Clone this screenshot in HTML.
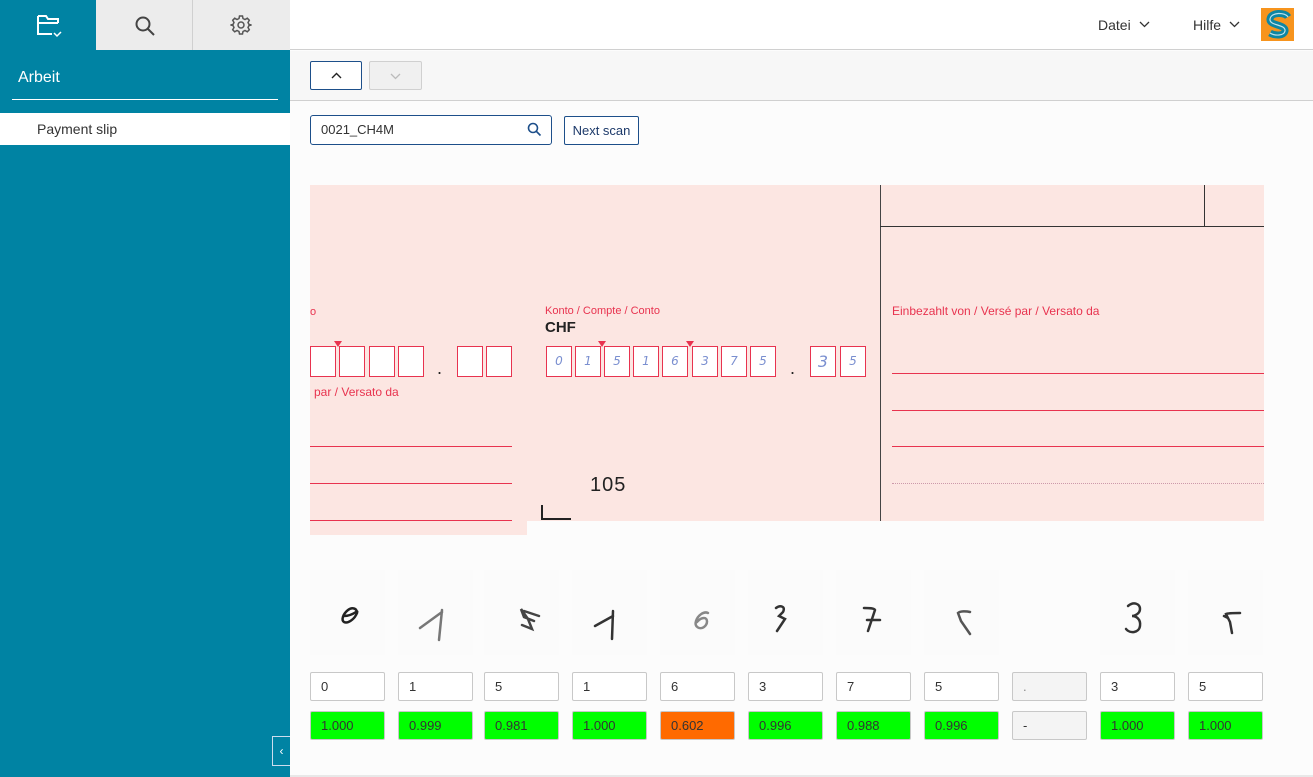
<!DOCTYPE html>
<html><head><meta charset="utf-8"><style>
*{margin:0;padding:0;box-sizing:border-box}
body{width:1313px;height:777px;position:relative;overflow:hidden;background:#fcfcfc;font-family:"Liberation Sans",Arial,sans-serif;font-size:13px;color:#333}
.a{position:absolute}
.red{color:#e8334f}
.bx{position:absolute;border:1px solid #e8334f;background:#fff;width:26px;height:31px;top:346px}
.hw{font-family:"DejaVu Sans",sans-serif;color:#7a8fd0;font-size:12px;font-style:italic;text-align:center;line-height:29px}
.rl{position:absolute;height:1px;background:#e8334f}
.in{position:absolute;width:75px;height:29px;border:1px solid #c8c8c8;border-radius:2px;background:#fff;padding-left:10px;line-height:27px;font-size:13px;color:#333;top:672px}
.sc{position:absolute;width:75px;height:29px;border:1px solid #c8c8c8;border-radius:2px;background:#00ff00;padding-left:10px;line-height:27px;font-size:13px;color:#333;top:711px}
.dg{position:absolute;top:570px;width:75px;height:85px;background:#fbfbfb}
.dg svg{position:absolute;left:0;top:0}
</style></head><body>
<!-- sidebar -->
<div class="a" style="left:0;top:0;width:290px;height:777px;background:#0083a3"></div>
<div class="a" style="left:96px;top:0;width:194px;height:50px;background:#ececec"></div>
<div class="a" style="left:192px;top:0;width:1px;height:50px;background:#d0d0d0"></div>
<svg class="a" style="left:36px;top:13px" width="30" height="26" viewBox="0 0 30 26" fill="none" stroke="#fff" stroke-width="2"><path d="M2 3h8l2 3h10v4M2 3v18h14M2 10h20"/><path d="M18 20l3 3 4-4" stroke-width="1.5"/></svg>
<svg class="a" style="left:134px;top:15px" width="22" height="22" viewBox="0 0 22 22" fill="none" stroke="#444" stroke-width="2"><circle cx="9" cy="9" r="6.5"/><path d="M14 14l6 6"/></svg>
<svg class="a" style="left:230px;top:14px" width="22" height="22" viewBox="0 0 22 22" fill="none" stroke="#555" stroke-width="1.5"><circle cx="11" cy="11" r="3"/><path d="M9.5 2h3l.5 2.5 2 1 2.3-1.3 2 2-1.3 2.3 1 2L21.5 11v0l-2.5.5-1 2 1.3 2.3-2 2-2.3-1.3-2 1-.5 2.5h-3l-.5-2.5-2-1-2.3 1.3-2-2 1.3-2.3-1-2L.5 11l2.5-.5 1-2-1.3-2.3 2-2 2.3 1.3 2-1z"/></svg>
<div class="a" style="left:18px;top:69px;color:#fff;font-size:16px">Arbeit</div>
<div class="a" style="left:12px;top:99px;width:266px;height:1px;background:#fff"></div>
<div class="a" style="left:0;top:113px;width:290px;height:32px;background:#fff"></div>
<div class="a" style="left:37px;top:121px;font-size:14px;color:#333">Payment slip</div>
<div class="a" style="left:272px;top:736px;width:18px;height:30px;border:1px solid #cde;border-right:none;color:#fff;font-size:12px;text-align:center;line-height:28px">‹</div>
<!-- header -->
<div class="a" style="left:290px;top:0;width:1023px;height:50px;background:#fff;border-bottom:1px solid #d0d0d0"></div>
<div class="a" style="left:1098px;top:17px;font-size:14px;color:#333">Datei</div>
<svg class="a" style="left:1139px;top:21px" width="11" height="7" viewBox="0 0 11 7" fill="none" stroke="#333" stroke-width="1.3"><path d="M1 1l4.5 4.5L10 1"/></svg>
<div class="a" style="left:1193px;top:17px;font-size:14px;color:#333">Hilfe</div>
<svg class="a" style="left:1229px;top:21px" width="11" height="7" viewBox="0 0 11 7" fill="none" stroke="#333" stroke-width="1.3"><path d="M1 1l4.5 4.5L10 1"/></svg>
<svg class="a" style="left:1261px;top:8px" width="33" height="33" viewBox="0 0 33 33"><rect width="33" height="33" fill="#f7941d"/><path d="M27 9C24 4 10 4 9 11c-1 7 16 5 15 12-1 5-10 5-15 2" stroke="#0f86a3" stroke-width="7" fill="none"/><path d="M27 9C24 4 10 4 9 11c-1 7 16 5 15 12-1 5-10 5-15 2" stroke="#bfe3ec" stroke-width="1.2" fill="none"/></svg>
<!-- toolbar -->
<div class="a" style="left:290px;top:51px;width:1023px;height:50px;background:#f7f7f7;border-bottom:1px solid #d0d0d0"></div>
<div class="a" style="left:310px;top:61px;width:52px;height:29px;border:1px solid #1d4f8a;border-radius:2px;background:#fff"></div>
<svg class="a" style="left:331px;top:72px" width="11" height="7" viewBox="0 0 11 7" fill="none" stroke="#222" stroke-width="1.4"><path d="M1 6l4.5-4.5L10 6"/></svg>
<div class="a" style="left:369px;top:61px;width:53px;height:29px;border:1px solid #d0d0d0;border-radius:2px;background:#f0f0f0"></div>
<svg class="a" style="left:390px;top:73px" width="11" height="7" viewBox="0 0 11 7" fill="none" stroke="#bbb" stroke-width="1.3"><path d="M1 1l4.5 4.5L10 1"/></svg>
<div class="a" style="left:310px;top:115px;width:242px;height:30px;border:1px solid #1d4f8a;border-radius:3px;background:#fff;padding-left:10px;line-height:28px;font-size:13px">0021_CH4M</div>
<svg class="a" style="left:527px;top:122px" width="15" height="15" viewBox="0 0 15 15" fill="none" stroke="#1d4f8a" stroke-width="1.6"><circle cx="6" cy="6" r="4.5"/><path d="M9.5 9.5l4 4"/></svg>
<div class="a" style="left:564px;top:116px;width:75px;height:29px;border:1px solid #1d4f8a;border-radius:2px;background:#fff;text-align:center;line-height:28px;font-size:13px;color:#1d3a6a">Next scan</div>
<!-- form -->
<div class="a" style="left:310px;top:185px;width:954px;height:336px;background:#fce6e2"></div>
<div class="a" style="left:310px;top:521px;width:217px;height:14px;background:#fce6e2"></div>
<div class="a" style="left:880px;top:185px;width:1px;height:336px;background:#444"></div>
<div class="a" style="left:880px;top:226px;width:384px;height:1px;background:#333"></div>
<div class="a" style="left:1204px;top:185px;width:1px;height:41px;background:#333"></div>
<div class="a red" style="left:310px;top:306px;font-size:11px">o</div>
<div class="a red" style="left:314px;top:385px;font-size:12px">par / Versato da</div>
<div class="a red" style="left:545px;top:305px;font-size:11px">Konto / Compte / Conto</div>
<div class="a" style="left:545px;top:319px;font-size:15px;font-weight:bold;color:#222">CHF</div>
<div class="a red" style="left:892px;top:304px;font-size:12px">Einbezahlt von / Versé par / Versato da</div>
<div class="bx" style="left:310px"></div><div class="bx" style="left:339px"></div><div class="bx" style="left:369px"></div><div class="bx" style="left:398px"></div>
<div class="a" style="left:437px;top:358px;font-size:18px;color:#222">.</div>
<div class="bx" style="left:457px"></div><div class="bx" style="left:486px"></div>
<div class="bx hw" style="left:546px">0</div><div class="bx hw" style="left:575px">1</div><div class="bx hw" style="left:604px">5</div><div class="bx hw" style="left:633px">1</div><div class="bx hw" style="left:662px">6</div><div class="bx hw" style="left:692px">3</div><div class="bx hw" style="left:721px">7</div><div class="bx hw" style="left:750px">5</div>
<div class="a" style="left:790px;top:358px;font-size:18px;color:#222">.</div>
<div class="bx hw" style="left:810px;font-size:16px">3</div><div class="bx hw" style="left:840px">5</div>
<div class="a" style="left:334px;top:341px;border:4px solid transparent;border-top:6px solid #e8334f"></div>
<div class="a" style="left:598px;top:341px;border:4px solid transparent;border-top:6px solid #e8334f"></div>
<div class="a" style="left:686px;top:341px;border:4px solid transparent;border-top:6px solid #e8334f"></div>
<div class="rl" style="left:310px;top:446px;width:202px"></div>
<div class="rl" style="left:310px;top:483px;width:202px"></div>
<div class="rl" style="left:310px;top:520px;width:202px"></div>
<div class="rl" style="left:892px;top:373px;width:372px"></div>
<div class="rl" style="left:892px;top:410px;width:372px"></div>
<div class="rl" style="left:892px;top:446px;width:372px"></div>
<div class="a" style="left:892px;top:483px;width:372px;border-top:1px dotted #c9a"></div>
<div class="a" style="left:590px;top:474px;font-size:20px;color:#222;letter-spacing:1px">105</div>
<div class="a" style="left:541px;top:505px;width:2px;height:15px;background:#222"></div>
<div class="a" style="left:541px;top:518px;width:30px;height:2px;background:#222"></div>
<!-- digits (handwritten strokes) -->
<div class="dg" style="left:310px"><svg width="75" height="85" fill="none" stroke="#222" stroke-width="2.5" stroke-linecap="round"><path d="M47 43c0-5-5-6-9-3-5 4-7 10-4 12 4 2 10-3 12-7 2-3 1-5 1-2"/><path d="M34 46c4 0 9-2 12-4"/></svg></div>
<div class="dg" style="left:398px"><svg width="75" height="85" fill="none" stroke="#777" stroke-width="2.5" stroke-linecap="round"><path d="M22 58l22-16M44 40l-3 30"/></svg></div>
<div class="dg" style="left:484px"><svg width="75" height="85" fill="none" stroke="#444" stroke-width="2.5" stroke-linecap="round"><path d="M50 51l-10-4-3-8 7 10 4 10-10-4M40 41l15 5"/></svg></div>
<div class="dg" style="left:572px"><svg width="75" height="85" fill="none" stroke="#333" stroke-width="2.5" stroke-linecap="round"><path d="M23 56l18-10M41 41l-1 28"/></svg></div>
<div class="dg" style="left:660px"><svg width="75" height="85" fill="none" stroke="#888" stroke-width="2.5" stroke-linecap="round"><path d="M48 43c-4-2-10 2-12 8s4 9 8 6 4-9 0-9-6 3-7 4"/></svg></div>
<div class="dg" style="left:748px"><svg width="75" height="85" fill="none" stroke="#333" stroke-width="2.5" stroke-linecap="round"><path d="M28 38c4-3 10-2 7 4l-4 4 6 3-8 12"/></svg></div>
<div class="dg" style="left:836px"><svg width="75" height="85" fill="none" stroke="#333" stroke-width="2.5" stroke-linecap="round"><path d="M28 38c5 0 10 0 11 2l-4 12-3 9M31 50h13"/></svg></div>
<div class="dg" style="left:924px"><svg width="75" height="85" fill="none" stroke="#555" stroke-width="2.5" stroke-linecap="round"><path d="M46 42c-4-1-10-1-12 1l3 8 9 13"/></svg></div>
<div class="dg" style="left:1012px;background:#fcfcfc"></div>
<div class="dg" style="left:1100px"><svg width="75" height="85" fill="none" stroke="#333" stroke-width="2.5" stroke-linecap="round"><path d="M28 36c6-5 12-2 12 3s-6 7-8 7c4 0 9 3 8 10s-10 8-14 3"/></svg></div>
<div class="dg" style="left:1188px"><svg width="75" height="85" fill="none" stroke="#333" stroke-width="2.5" stroke-linecap="round"><path d="M52 43c-6 0-12 0-14 1l4 8 2 11M36 46l4 2"/></svg></div>
<div class="in" style="left:310px">0</div><div class="in" style="left:398px">1</div><div class="in" style="left:484px">5</div><div class="in" style="left:572px">1</div><div class="in" style="left:660px">6</div><div class="in" style="left:748px">3</div><div class="in" style="left:836px">7</div><div class="in" style="left:924px">5</div><div class="in" style="left:1012px;background:#f4f4f4;color:#888">.</div><div class="in" style="left:1100px">3</div><div class="in" style="left:1188px">5</div>
<div class="sc" style="left:310px">1.000</div><div class="sc" style="left:398px">0.999</div><div class="sc" style="left:484px">0.981</div><div class="sc" style="left:572px">1.000</div><div class="sc" style="left:660px;background:#ff6a00">0.602</div><div class="sc" style="left:748px">0.996</div><div class="sc" style="left:836px">0.988</div><div class="sc" style="left:924px">0.996</div><div class="sc" style="left:1012px;background:#f4f4f4">-</div><div class="sc" style="left:1100px">1.000</div><div class="sc" style="left:1188px">1.000</div>
<div class="a" style="left:290px;top:775px;width:1023px;height:2px;background:#e8e8e8"></div>
</body></html>
